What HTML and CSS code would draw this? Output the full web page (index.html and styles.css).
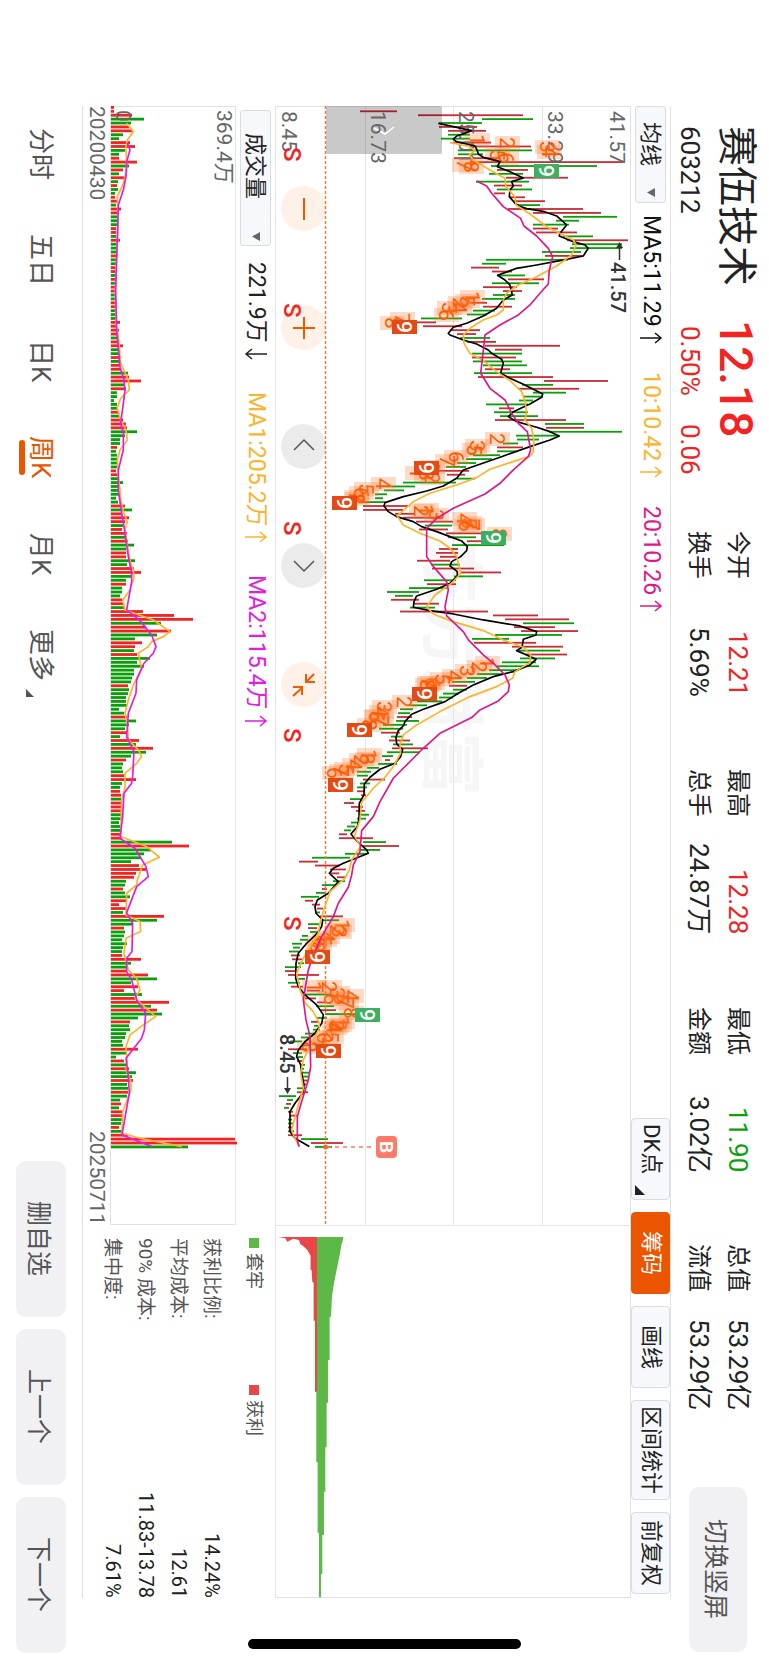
FILE: index.html
```html
<!DOCTYPE html>
<html lang="zh-CN">
<head>
<meta charset="utf-8" />
<meta name="viewport" content="width=device-width, initial-scale=1" />
<title>赛伍技术 603212 周K</title>
<link rel="stylesheet" href="styles.css">
</head>
<body>
<div class="page">
  <!--顶部行情-->
  <header class="header">
    <div class="stock">
      <h1 class="stock_name">赛伍技术</h1>
      <strong class="stock_price">12.18</strong>
      <span class="stock_code">603212</span>
      <span class="stock_change"><span>0.50%</span><span>0.06</span></span>
    </div>
    <dl class="quote">
      <div><dt>今开</dt><dd class="up">12.21</dd></div>
      <div><dt>最高</dt><dd class="up">12.28</dd></div>
      <div><dt>最低</dt><dd class="down">11.90</dd></div>
      <div><dt>总值</dt><dd>53.29亿</dd></div>
      <div><dt>换手</dt><dd>5.69%</dd></div>
      <div><dt>总手</dt><dd>24.87万</dd></div>
      <div><dt>金额</dt><dd>3.02亿</dd></div>
      <div><dt>流值</dt><dd>53.29亿</dd></div>
    </dl>
    <button type="button" class="btn btn_turn">切换竖屏</button>
  </header>

  <!--均线工具条-->
  <div class="toolbar">
    <button type="button" class="tag drop" aria-haspopup="true">均线<svg class="tri" viewBox="0 0 8 9"><path d="M8 0L0 4.500L8 9z"/></svg></button>
    <span class="ma ma5">MA5:11.29<svg class="arrow" viewBox="0 0 22 12"><path d="M0 6H21M15 1L21 6L15 11"/></svg></span>
    <span class="ma ma10">10:10.42<svg class="arrow" viewBox="0 0 22 12"><path d="M0 6H21M15 1L21 6L15 11"/></svg></span>
    <span class="ma ma20">20:10.26<svg class="arrow" viewBox="0 0 22 12"><path d="M0 6H21M15 1L21 6L15 11"/></svg></span>
    <div class="tools">
      <button type="button" class="tool tool_dk">DK点<svg class="corner" viewBox="0 0 10 10"><path d="M0 0V10H10z"/></svg></button>
      <button type="button" class="tool on">筹码</button>
      <button type="button" class="tool">画线</button>
      <button type="button" class="tool">区间统计</button>
      <button type="button" class="tool">前复权</button>
    </div>
  </div>

  <!--K线-->
  <div class="kline">
    <svg class="chart" id="kline" viewBox="275 106 356 1492">
      <text class="mark" transform="translate(429 540) rotate(90)">东方财富</text>
      <path class="grid" d="M365.500 106V1225M453.500 106V1225M542.500 106V1225M275 1225.500H631"/>
      <path class="frame" d="M275.500 106.500H630.500V1597.500H275.500z"/>
      <g id="klineBars"></g>
      <rect x="326" y="106" width="116" height="48" rx="2" fill="#000" fill-opacity=".21"/>
      <path d="M374 128L385 134L394 127" fill="none" stroke="#fff" stroke-width="1.500"/>
      <g class="axis">
        <text transform="translate(282 111) rotate(90)">8.45</text>
        <text transform="translate(371 111) rotate(90)">16.73</text>
        <text transform="translate(459 111) rotate(90)">25.01</text>
        <text transform="translate(548 111) rotate(90)">33.29</text>
        <text transform="translate(610 111) rotate(90)">41.57</text>
      </g>
      <g id="tdMarks"></g>
      <path class="now" d="M325.500 106V1225"/>
      <g class="lines" transform="translate(270 90) scale(.3333)">
        <polyline stroke="#000" points="505,100 605,122 585,130 560,138 550,148 560,155 615,168 622,182 625,192 640,202 690,215 682,230 720,245 760,264 725,275 730,288 720,300 718,320 735,340 752,350 770,356 820,364 860,378 890,405 870,430 868,438 910,455 945,465 955,475 945,490 940,498 870,512 800,525 740,535 683,556 705,570 720,585 727,615 700,630 680,655 640,678 590,700 550,712 535,730 540,735 580,750 620,762 655,780 665,790 695,808 700,820 692,850 720,865 760,883 790,898 818,912 815,922 780,942 730,965 715,980 740,995 800,1012 840,1025 868,1038 840,1050 780,1070 690,1102 580,1140 560,1165 520,1188 470,1203 400,1220 345,1238 342,1248 355,1265 380,1280 430,1295 455,1310 500,1325 540,1340 575,1353 592,1370 590,1382 572,1400 545,1415 540,1428 562,1445 562,1458 540,1480 500,1498 440,1518 432,1535 430,1552 480,1562 550,1572 640,1590 750,1608 800,1625 798,1635 760,1648 756,1672 740,1682 770,1695 798,1708 780,1725 730,1745 670,1760 610,1785 565,1810 525,1835 460,1858 425,1873 405,1895 400,1908 385,1922 378,1942 380,1962 398,1978 392,2000 375,2020 330,2038 300,2062 283,2082 282,2115 268,2140 267,2188 262,2210 243,2232 262,2255 290,2280 295,2290 265,2302 220,2320 190,2335 178,2350 205,2375 175,2410 142,2430 135,2450 138,2470 158,2490 155,2510 140,2532 110,2560 85,2590 78,2620 77,2665 85,2690 105,2715 140,2745 160,2775 155,2800 135,2830 105,2855 85,2880 80,2900 92,2925 95,2950 102,2985 98,3010 75,3040 60,3065 60,3125 75,3145 118,3170"/>
        <polyline stroke="#ffb32c" points="540,158 595,168 615,182 598,195 610,210 660,240 705,265 708,290 735,320 738,345 780,372 830,410 910,450 918,465 905,495 860,528 800,560 745,585 710,610 700,630 700,660 680,675 640,690 600,715 580,735 582,760 600,790 640,812 680,845 720,872 755,905 765,935 770,965 765,990 785,1015 792,1050 790,1085 780,1098 720,1118 660,1138 620,1163 560,1185 480,1210 430,1235 382,1278 400,1305 450,1330 510,1353 540,1375 560,1400 572,1450 545,1480 495,1515 470,1550 490,1572 540,1592 640,1622 700,1650 760,1672 782,1695 780,1718 735,1745 728,1765 680,1790 600,1820 510,1865 440,1905 400,1935 390,1965 392,1990 370,2030 345,2062 310,2095 275,2138 270,2190 253,2238 272,2270 245,2310 238,2340 225,2365 180,2405 160,2465 150,2500 145,2530 100,2605 80,2650 90,2700 105,2738 130,2765 148,2800 148,2815 130,2850 100,2910 92,2950 100,2995 85,3045 65,3120 72,3140 88,3170"/>
        <polyline stroke="#e0168c" points="620,273 650,288 665,310 700,350 752,385 762,408 800,438 835,475 848,500 838,540 835,582 810,610 780,645 745,675 690,705 645,735 638,800 632,850 660,895 705,930 725,970 745,1000 772,1025 782,1080 775,1100 730,1140 690,1180 645,1212 550,1255 500,1285 470,1315 470,1400 490,1430 530,1475 535,1500 525,1550 530,1578 580,1625 595,1650 640,1695 670,1720 705,1755 718,1785 715,1805 685,1833 630,1860 605,1883 510,1930 460,1975 370,2065 330,2135 310,2180 275,2222 270,2285 250,2325 245,2355 235,2392 205,2440 190,2480 155,2540 130,2595 115,2640 108,2680 100,2730 108,2790 120,2840 122,2930 115,2970 95,3035 82,3080 82,3150 87,3170"/>
      </g>
      <g id="tdNines"></g>
      <!--最高最低-->
      <g class="peak">
        <text transform="translate(611 262) rotate(90)">41.57</text>
        <path d="M619.500 260V246"/><path class="head" d="M619.500 242L616 248H623z"/>
        <text transform="translate(280 1034) rotate(90)">8.45</text>
        <path d="M287.500 1077V1090"/><path class="head" d="M287.500 1094L284 1088H291z"/>
      </g>
      <!--卖点-->
      <g class="sell">
        <text transform="translate(284 147) rotate(90)">S</text>
        <text transform="translate(284 303) rotate(90)">S</text>
        <text transform="translate(284 521) rotate(90)">S</text>
        <text transform="translate(284 728) rotate(90)">S</text>
        <text transform="translate(284 916) rotate(90)">S</text>
      </g>
      <!--买点-->
      <path d="M327 1147H372" stroke="#ff7a68" stroke-width="1.500" stroke-dasharray="4 4"/>
      <circle cx="325.500" cy="1147" r="2.500" fill="#f26a21"/>
      <rect x="376" y="1136" width="21" height="22" rx="4" fill="#ff7a68"/>
      <text class="buy" transform="translate(380 1141) rotate(90)">B</text>
      <!--筹码分布-->
      <g transform="translate(0 1220) scale(.3333)">
        <path fill="#5cb947" d="M950 51H1030L1028 64L1024 75L1021 95L1018 110L1014 130L1010 150L1006 170L1002 190L999 210L996 230L993 290H989V420H984V548H980V682H976V815H972V945H967V1062H963V1132H957V938H953V727H949V520z"/>
        <path fill="#ea4547" d="M951 51H835L856 55L862 65L880 56L897 60L901 72L912 80L922 90L932 107V150H935L937 185L941 188V302H945V515H951z"/>
      </g>
    </svg>
    <div class="pad">
      <button type="button" class="round warm" aria-label="缩小"><svg viewBox="0 0 45 45"><path d="M23 12V34"/></svg></button>
      <button type="button" class="round warm" aria-label="放大"><svg viewBox="0 0 45 45"><path d="M23 12V34M12 23H34"/></svg></button>
      <button type="button" class="round" aria-label="左移"><svg viewBox="0 0 45 45"><path d="M13 26L23 16L33 26"/></svg></button>
      <button type="button" class="round" aria-label="右移"><svg viewBox="0 0 45 45"><path d="M13 18L23 28L33 18"/></svg></button>
      <button type="button" class="round warm" aria-label="收起"><svg viewBox="0 0 45 45"><path d="M33 12L25 20M25 12V20H34M12 34L21 26M12 25H21V33"/></svg></button>
    </div>
  </div>

  <!--成交量-->
  <div class="bottom">
    <div class="volume">
      <div class="volume_bar">
        <button type="button" class="tag drop drop_vol" aria-haspopup="true">成交量<svg class="tri" viewBox="0 0 8 9"><path d="M8 0L0 4.500L8 9z"/></svg></button>
        <span class="ma vol">221.9万<svg class="arrow" viewBox="0 0 22 12"><path d="M22 6H1M7 1L1 6L7 11"/></svg></span>
        <span class="ma ma10">MA1:205.2万<svg class="arrow" viewBox="0 0 22 12"><path d="M0 6H21M15 1L21 6L15 11"/></svg></span>
        <span class="ma ma2">MA2:115.4万<svg class="arrow" viewBox="0 0 22 12"><path d="M0 6H21M15 1L21 6L15 11"/></svg></span>
      </div>
      <svg class="chart" id="volume" viewBox="110 106 126 1119">
        <path class="frame" d="M110.500 106.500H235.500V1224.500H110.500z"/>
        <g id="volumeBars"></g>
        <g class="axis">
          <text transform="translate(217 110) rotate(90)">369.4万</text>
          <text transform="translate(116 110) rotate(90)">0</text>
        </g>
        <g class="lines" transform="translate(0 90) scale(.3333)">
          <polyline stroke="#ffb32c" points="380,100 400,125 382,150 378,170 380,240 370,280 352,320 355,400 350,500 346,600 348,700 355,740 362,820 385,870 388,900 362,925 352,955 362,990 378,1020 382,1050 360,1080 352,1110 355,1160 360,1200 362,1230 372,1270 382,1295 375,1320 382,1365 392,1420 400,1440 402,1465 390,1500 368,1530 375,1560 460,1590 510,1625 490,1640 455,1655 445,1670 415,1690 420,1715 425,1735 400,1785 385,1830 375,1870 383,1910 385,1950 415,1980 425,2000 410,2020 375,2050 375,2095 365,2130 362,2240 440,2270 478,2302 428,2325 412,2370 410,2385 380,2410 378,2475 420,2495 422,2525 378,2545 372,2590 385,2640 410,2665 420,2700 405,2725 450,2765 467,2780 430,2805 390,2835 378,2870 382,2915 378,2940 393,2975 393,3000 368,3065 366,3130 420,3145 545,3170"/>
          <polyline stroke="#e41be4" points="382,158 390,180 380,215 378,260 370,300 355,345 352,440 347,600 350,720 360,830 372,870 375,900 370,940 362,1000 370,1030 370,1080 355,1140 355,1200 362,1250 372,1310 385,1400 395,1450 395,1475 380,1560 420,1592 455,1635 468,1670 460,1690 432,1720 410,1770 408,1810 385,1870 380,1940 402,1985 398,2060 395,2080 372,2110 368,2180 360,2245 405,2275 438,2330 445,2360 410,2390 380,2468 398,2500 396,2585 380,2605 380,2645 395,2670 410,2730 437,2770 433,2820 425,2845 378,2905 385,2960 388,3010 366,3135 455,3170"/>
        </g>
      </svg>
      <div class="dates"><span>20200430</span><span>20250711</span></div>
    </div>
    <div class="chips">
      <ul class="legend">
        <li class="trapped">套牢</li>
        <li class="profit">获利</li>
      </ul>
      <dl class="cost">
        <div><dt>获利比例:</dt><dd>14.24%</dd></div>
        <div><dt>平均成本:</dt><dd>12.61</dd></div>
        <div><dt>90% 成本:</dt><dd>11.83-13.78</dd></div>
        <div><dt>集中度:</dt><dd>7.61%</dd></div>
      </dl>
    </div>
  </div>

  <!--周期切换-->
  <footer class="footer">
    <nav class="period">
      <a href="#">分时</a>
      <a href="#">五日</a>
      <a href="#">日K</a>
      <a href="#" class="on">周K</a>
      <a href="#">月K</a>
      <a href="#" class="more">更多<svg class="corner" viewBox="0 0 10 10"><path d="M0 0V10H10z"/></svg></a>
    </nav>
    <div class="switch">
      <button type="button" class="btn">删自选</button>
      <button type="button" class="btn">上一个</button>
      <button type="button" class="btn">下一个</button>
    </div>
  </footer>
  <div class="home"></div>
</div>
<script src="chart.js"></script>
</body>
</html>
```
FILE: styles.css
```css
* { box-sizing:border-box }
body, h1, ul, dl, dd, dt, li { margin:0; padding:0; font-weight:normal }
li { list-style:none }
a { color:inherit; text-decoration:none }
button { font:inherit; color:inherit; margin:0; padding:0; border:0; background:none; writing-mode:inherit; text-orientation:inherit; white-space:nowrap; cursor:pointer }
svg { display:block; flex:none; overflow:visible }
body { background:#fff; color:#222; font-family:Roboto, "Noto Sans CJK SC", sans-serif; font-size:22px; }

/* 横屏: 行向从上到下, 块向从右到左 */
.page { writing-mode:vertical-rl; text-orientation:sideways; position:relative; width:100%; height:100vh; display:flex; flex-direction:column; overflow:hidden }

/* 顶部 */
.header { block-size:98px; flex:none; display:flex; align-items:center; padding-block-start:4px; padding-inline:126px 13px; }
.stock { inline-size:405px; flex:none; display:grid; grid-template-columns:194px auto; grid-template-rows:46px 46px; align-items:center; margin-block-start:10px; }
.stock_name { font-size:40px; line-height:46px; }
.stock_price { font-size:46px; line-height:46px; font-weight:500; color:#f52222; }
.stock_code { font-size:26px; line-height:46px; }
.stock_change { display:flex; gap:28px; padding-inline-start:6px; font-size:26px; line-height:46px; color:#f52222; }
.quote { flex:1; display:grid; grid-template-columns:repeat(4, 1fr); column-gap:72px; line-height:39px; }
.quote div { display:flex; justify-content:space-between; white-space:nowrap; }
.quote dt { font-size:24px; }
.quote dd { font-size:26px; }
.up { color:#f52222 }
.down { color:#09a209 }
.btn { flex:none; block-size:50px; inline-size:156px; border-radius:10px; background:#f1f1f4; color:#555; font-size:25px; text-align:center; }
.btn_turn { block-size:58px; inline-size:165px; margin-inline-start:77px; }

/* 均线工具条 */
.toolbar { block-size:40px; flex:none; display:flex; align-items:center; margin-inline:106px 67px; border-block-start:1px solid #e2e3e6; font-size:22px; }
.tag { block-size:31px; border:1px solid #d9dce3; border-radius:3px; background:#f7f8fb; }
.drop { display:flex; align-items:center; justify-content:space-between; inline-size:97px; padding-inline:15px 5px; font-size:22px; line-height:29px; }
.drop_vol { inline-size:136px; padding-inline:22px 4px; margin-inline-start:4px; }
.tri { width:8px; height:9px; fill:#666; }
.ma { display:flex; align-items:center; gap:5px; font-size:23px; line-height:30px; white-space:nowrap; }
.ma + .ma { margin-inline-start:28px; }
.tag + .ma { margin-inline-start:12px; }
.arrow { width:22px; height:12px; fill:none; stroke:currentColor; stroke-width:1.5; }
.ma5 { color:#111 }
.ma10 { color:#ffb32c }
.ma20 { color:#e0168c }
.ma2 { color:#e41be4 }
.tools { margin-inline-start:auto; padding-inline-end:4px; display:flex; gap:12px; }
.tool { position:relative; block-size:39px; min-inline-size:82px; padding-inline:5px; border:1px solid #d9dce3; border-radius:4px; background:#f7f8fb; font-size:22px; line-height:36px; text-align:center; }
.tool.on { background:#ec5500; border-color:#ec5500; color:#fff; }
.tool_dk { text-align:start; }
.corner { width:10px; height:10px; fill:#222; }
.tool_dk .corner { position:absolute; left:3px; bottom:4px; }

/* K线 */
.kline { flex:1; min-block-size:0; position:relative; margin-inline:106px 67px; }
.chart { width:100%; height:100%; }
.chart text { writing-mode:horizontal-tb; font-size:21px; }
.chart .axis text { fill:#666; }
.chart .mark { font-size:64px; font-weight:bold; fill:#f6f6f6; }
.grid { fill:none; stroke:#e3e6ec; }
.frame { fill:none; stroke:#e0e2e6; }
.now { fill:none; stroke:#f08040; stroke-width:1.5; stroke-dasharray:3 2; }
.lines polyline { fill:none; stroke-width:5; stroke-linejoin:round; }
.chart .peak text { font-size:20px; font-weight:500; fill:#333; }
.peak path { stroke:#333; stroke-width:1.5; }
.peak .head { fill:#333; stroke:none; }
.chart .sell text { font-size:24px; font-weight:500; fill:#f52222; }
.chart .buy { font-size:19px; font-weight:bold; fill:#fff; }
.td rect { fill:#ff7a33; fill-opacity:.28; }
.chart .td text { fill:#ff5a00; }
.nine rect { fill:#e64a14; }
.nine.green rect { fill:#3cb060; }
.chart .nine text { fill:#fff; font-weight:500; }
.pad { position:absolute; left:6px; top:80px; display:flex; gap:74px; }
.round { width:45px; height:45px; border-radius:50%; background:rgba(0,0,0,.08); }
.round svg { width:45px; height:45px; fill:none; stroke:#555; stroke-width:1.5; }
.round.warm { background:rgba(255,110,30,.1); }
.round.warm svg { stroke:#f05a00; stroke-width:2; }

/* 成交量 */
.bottom { flex:none; display:grid; grid-template-columns:3fr 1fr; margin-inline:106px 67px; block-size:193px; border-block-end:1px solid #e0e0e2; }
.volume { display:flex; flex-direction:column; min-inline-size:0; }
.volume_bar { block-size:39px; flex:none; display:flex; align-items:center; }
.volume .chart { width:126px; height:100%; }
.volume_bar .tag + .ma { margin-inline-start:16px; }
.volume_bar .ma + .ma { margin-inline-start:32px; }
.dates { display:flex; justify-content:space-between; font-size:21px; line-height:26px; color:#666; }
.chips { padding-inline-start:13px; }
.legend { display:flex; gap:96px; font-size:18px; line-height:42px; color:#555; }
.legend li { display:flex; align-items:center; gap:5px; }
.legend li:before { content:""; width:10px; height:10px; background:#5cb947; }
.legend .profit:before { background:#ea4547; }
.cost { padding-block-start:5px; line-height:33px; }
.cost div { display:flex; justify-content:space-between; white-space:nowrap; }
.cost dt { font-size:19px; color:#555; }
.cost dd { font-size:20px; }

/* 底部 */
.footer { block-size:82px; flex:none; display:flex; align-items:center; justify-content:space-between; padding-inline:128px 12px; }
.period { display:flex; gap:54px; font-size:26px; line-height:50px; color:#555; }
.period a { position:relative; white-space:nowrap; }
.period .on { color:#ec5500; }
.period .on:after { content:""; position:absolute; left:3px; top:4px; bottom:4px; width:6px; border-radius:3px; background:#ec5500; }
.more .corner { position:absolute; left:10px; bottom:-16px; width:8px; height:8px; fill:#555; }
.switch { display:flex; gap:12px; }
.home { position:absolute; left:248px; right:248px; bottom:16px; height:10px; border-radius:5px; background:#000; }
```
FILE: chart.js
```javascript
//K线 每根: 颜色 低 高
var kdata = "r360-397 r418-523 g482-533 g439-482 r439-477 r448-486 g448-470 g441-470 r453-491 r470-531 g458-532 g458-483 r454-500 r470-623 g491-597 r497-528 g489-523 r506-568 g476-529 r494-522 g497-532 r494-505 r510-525 r513-545 g518-540 r508-583 r533-601 g563-617 g556-579 g533-569 r533-558 r536-577 g563-593 r567-628 g572-622 g570-622 g542-581 r545-583 g486-568 g482-506 r471-499 r492-512 g497-525 r508-544 g492-539 r483-517 r503-522 g493-515 g482-515 r470-487 r483-512 g473-495 g467-487 g421-462 r410-436 r423-462 r450-480 r457-476 g460-490 r467-496 r485-560 r495-522 g472-522 r472-516 g473-522 g483-527 r485-510 g474-532 r478-553 r544-608 g522-553 r518-579 g533-566 g523-543 g519-533 g486-528 r499-514 g494-528 g500-538 r495-566 g545-584 r546-584 g549-622 g516-557 g517-539 g503-518 r497-523 g497-518 g473-500 g466-492 g457-476 g446-466 r437-469 r447-465 g457-475 g403-456 g391-415 g384-404 g375-387 g375-383 g363-385 r363-408 r363-403 r395-415 r403-443 r416-453 g425-452 r419-448 r446-483 g448-476 r467-483 g452-504 r439-458 r436-458 r440-457 r417-450 g431-460 r432-474 r460-501 g454-483 g424-456 r427-456 g409-447 g387-419 g395-413 r391-419 r413-439 g410-435 r400-488 r493-538 r505-569 g523-574 r514-555 r521-578 g495-562 g472-509 r474-536 r512-563 g519-560 r526-567 g520-555 g502-536 g497-539 g489-517 g477-503 g467-487 g452-475 r449-467 g453-467 g443-459 g439-453 g417-442 g410-427 g400-413 g398-410 r397-412 g396-419 g383-407 g379-403 r381-400 g391-403 r389-410 g393-413 r392-428 g387-420 g382-393 r385-390 g378-397 g367-379 g357-371 g357-368 r363-385 g360-370 g357-367 r357-365 r361-366 g350-362 r344-354 r351-363 r356-365 g359-369 g357-366 g351-359 g347-355 g344-351 r339-347 r339-373 g363-386 r362-399 g360-380 g345-367 g312-350 r299-318 r315-340 r330-346 r331-339 r337-345 g333-345 g322-335 r322-327 g316-325 g301-319 r305-313 r312-320 r317-323 g316-320 r320-343 g322-339 g308-320 r308-317 g310-317 g302-308 g300-308 g292-302 g293-300 g289-299 r291-300 r292-303 g298-304 g285-301 r285-295 r288-319 g297-305 g288-300 r291-303 r307-320 g305-330 r305-316 r317-326 g316-334 r320-336 g325-356 g316-327 r311-318 g314-318 g313-320 g305-317 g301-309 g290-302 r303-310 r288-307 g293-302 g298-303 r297-302 g301-305 g300-304 g301-309 g301-308 r303-308 r303-306 g297-305 r297-308 g279-296 g287-293 r286-291 g284-289 r288-293 r290-297 g288-292 g288-293 r288-293 g288-294 r288-302 g301-328 r311-343 g315-332".split(" ");

//成交量 每根: 颜色 长度
var vdata = "r3 r3 r21 g33 g20 r18 r21 g12 g8 r19 r24 g14 g8 r8 r26 g18 r12 g8 r15 g7 r6 g7 g4 r4 r6 g5 r10 r6 g6 g6 g6 r5 r5 g5 r9 g5 g5 g5 r5 g5 g5 r4 r4 g4 r4 g4 r4 r4 g4 g4 r4 r4 g4 g4 g5 r9 r6 r8 r6 g7 r7 r12 g8 g9 r9 g9 r9 r10 g17 r18 r30 g13 r15 g6 g6 g3 g6 g6 r8 g9 r12 r15 r16 g26 g14 g9 g9 r6 g5 g6 g6 g6 g6 r5 r6 g8 g12 g8 g8 g8 g5 g7 r14 g21 r11 r18 r14 g12 r11 r16 g14 r17 g23 g15 r15 r15 g24 g16 r23 r30 g20 g15 r15 g11 g11 g9 r11 r13 g14 r32 r63 r82 g50 r35 r60 g46 g24 r31 r24 g23 r26 g39 g26 g33 g23 g23 g21 g20 r17 g18 g17 g15 g15 g16 g8 g13 r16 g25 g18 g14 r16 g9 r28 g25 r42 g35 g20 r15 g12 g11 g12 r13 r25 g11 g9 r9 r10 g10 r11 r11 r11 g10 g11 g8 g9 g9 r10 r11 g61 r78 g40 g33 g30 g20 r28 r36 r25 r23 g15 g14 r12 g14 g19 r15 r8 r15 g12 r53 g46 g21 r13 g14 g13 g11 g16 g12 g11 r11 r30 g20 g15 r15 r37 g46 g20 r27 r13 g31 r24 r58 g40 r46 g51 g27 r19 g18 g19 g15 g14 g11 g12 r27 g16 g5 r13 g15 r18 g25 g21 r22 g16 g17 r17 g16 g9 r10 g8 r11 r12 g11 g10 r8 g12 r17 r124 r126 g77".split(" ");

//九转序列 数字 x y
var td = "1,478,140 2,508,143 5,498,155 6,507,158 3,548,147 4,550,152 7,465,165 8,472,167 1,473,297 5,468,301 2,461,303 4,460,308 3,450,308 6,447,315 7,403,319 8,393,323 2,498,439 3,478,446 5,475,450 6,457,457 7,448,461 8,433,467 1,418,473 2,433,478 3,427,475 4,384,484 5,367,489 6,362,493 7,357,497 8,358,499 1,427,510 2,422,511 3,437,515 4,465,519 5,470,523 6,467,526 7,473,525 8,500,534 1,488,663 2,480,667 3,468,671 4,455,676 5,443,679 6,433,683 7,430,683 8,428,685 2,405,702 3,385,707 4,382,712 5,378,716 6,377,717 7,382,721 8,370,725 1,370,755 3,368,759 2,362,760 4,355,765 5,347,769 6,335,773 7,342,771 1,343,925 2,338,930 3,340,932 4,328,937 5,325,940 6,320,943 8,318,947 1,315,987 2,330,987 3,338,993 4,352,996 5,342,999 6,332,999 7,347,1003 8,352,1013 1,343,1022 2,340,1025 3,337,1026 4,335,1028 5,332,1037 6,325,1038 7,317,1043 8,310,1047".split(" ");
var nines = "g,547,171 r,405,327 r,427,468 r,345,503 g,494,538 r,425,694 r,360,730 r,341,785 r,318,957 g,368,1015 r,329,1051".split(" ");

var NS = "http://www.w3.org/2000/svg";
var step = 3.908;
var color = {
	k: {r: "#cb2b33", g: "#08a008"},
	v: {r: "#f52222", g: "#08a008"}
};

function add(parent, name, attrs) {
	var o = document.createElementNS(NS, name);
	for (var p in attrs) {
		o.setAttribute(p, attrs[p]);
	}
	parent.appendChild(o);
	return o;
}

function drawKline() {
	var box = document.getElementById("klineBars");
	for (var i = 0; i < kdata.length; i++) {
		var d = kdata[i].slice(1).split("-");
		var y = 111.3 + i * step;
		add(box, "rect", {x: d[0], y: y - 0.9, width: d[1] - d[0], height: 1.8, fill: color.k[kdata[i].charAt(0)]});
	}
}

function drawVolume() {
	var box = document.getElementById("volumeBars");
	for (var i = 0; i < vdata.length; i++) {
		var y = 107.4 + i * step;
		add(box, "rect", {x: 111, y: y - 1.4, width: vdata[i].slice(1), height: 2.8, fill: color.v[vdata[i].charAt(0)]});
	}
}

function drawMark(box, cls, num, x, y) {
	var g = add(box, "g", {"class": cls, transform: "translate(" + x + " " + y + ") rotate(90)"});
	add(g, "rect", {x: -7, y: -12, width: 14, height: 25});
	add(g, "text", {x: 0, y: 8, "text-anchor": "middle"}).textContent = num;
}

function drawTd() {
	var i, d;
	for (i = 0; i < td.length; i++) {
		d = td[i].split(",");
		drawMark(document.getElementById("tdMarks"), "td", d[0], d[1], d[2]);
	}
	for (i = 0; i < nines.length; i++) {
		d = nines[i].split(",");
		drawMark(document.getElementById("tdNines"), d[0] == "g" ? "nine green" : "nine", "9", d[1], d[2]);
	}
}

drawKline();
drawVolume();
drawTd();
```
